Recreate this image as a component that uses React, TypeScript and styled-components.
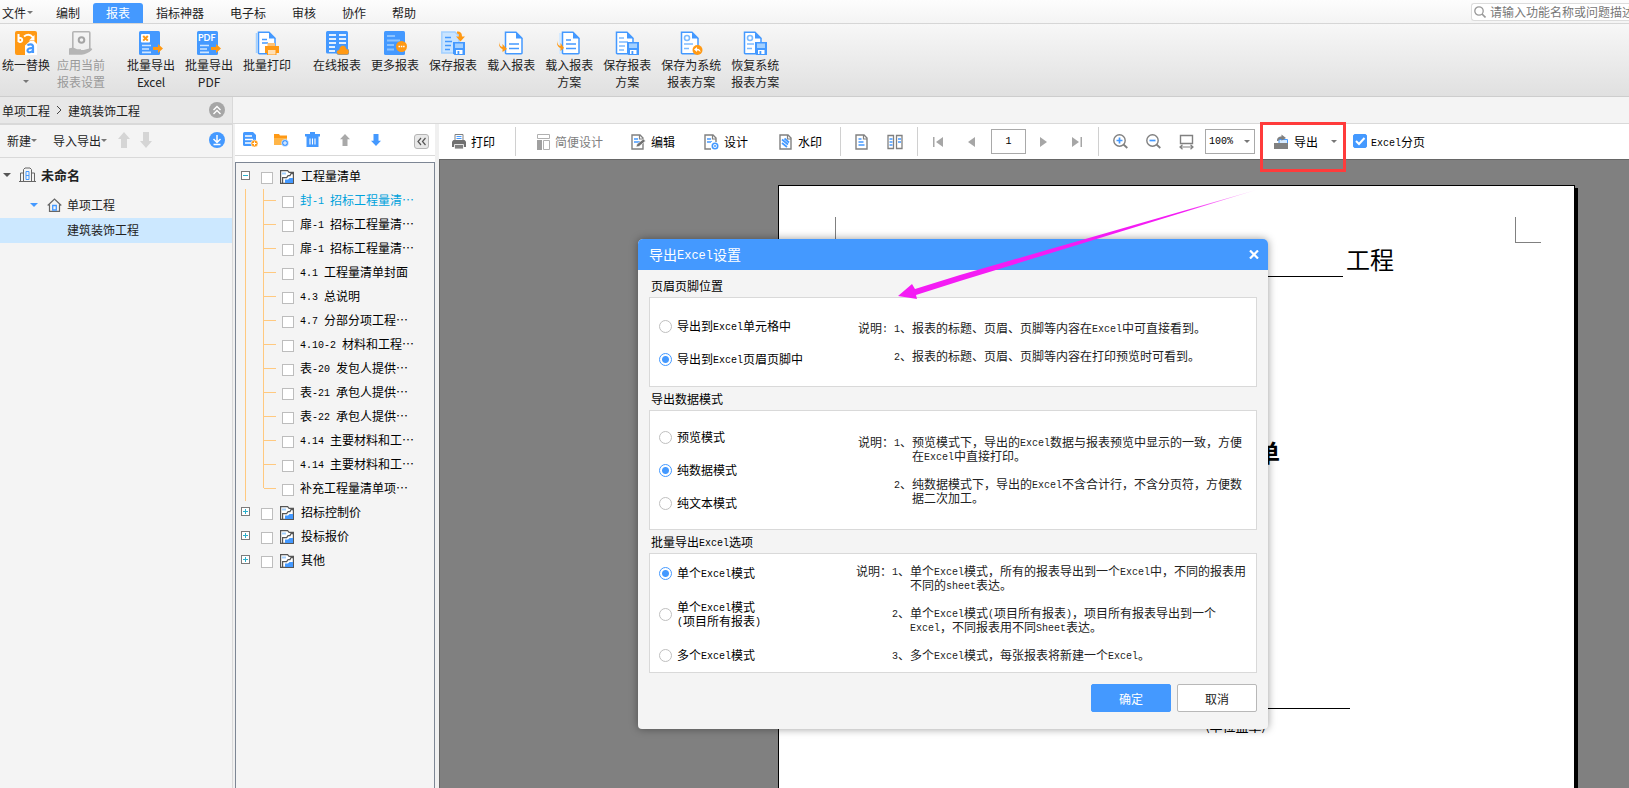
import React, { useState } from 'react';
import styled, { createGlobalStyle, css } from 'styled-components';

const BLUE = '#4499ff';
const ORANGE = '#ff9914';
const PALE = '#a3d0ff';

const GlobalStyle = createGlobalStyle`
  * { box-sizing: border-box; }
  body { margin: 0; overflow: hidden; background: #f4f4f4; }
  body, button, input, select {
    font-family: "Noto Sans CJK SC", "Noto Sans", sans-serif;
    font-size: 12px;
    color: #222;
  }
  button { border: 0; padding: 0; background: none; cursor: pointer; }
  ul, ol { list-style: none; margin: 0; padding: 0; }
  svg { display: block; flex: none; }
  h2, p { margin: 0; }
`;

/* ---------- text with half-width Latin runs ---------- */

const Half = styled.span<{ $large?: boolean }>`
  font-family: "Liberation Mono", monospace;
  font-size: ${(p) => (p.$large ? 12 : 10)}px;
  line-height: 0;
  vertical-align: 1px;
  white-space: pre;
`;

function T({ children, large }: { children: string; large?: boolean }) {
  const parts = children.split(/([\x20-\x7e]+)/).filter(Boolean);
  return (
    <span>
      {parts.map((p, i) =>
        /^[\x20-\x7e]/.test(p) ? <Half key={i} $large={large}>{p}</Half> : p
      )}
    </span>
  );
}

/* ---------- shell ---------- */

const Shell = styled.div`
  display: flex;
  flex-direction: column;
  height: 100vh;
  overflow: hidden;
`;

const MenuBar = styled.nav`
  display: flex;
  align-items: flex-end;
  height: 24px;
  border-bottom: 1px solid #d6d6d6;
  background: linear-gradient(#fdfdfd, #f4f4f4);
`;

const MenuItem = styled.button<{ $active?: boolean; $first?: boolean }>`
  display: flex;
  align-items: center;
  gap: 1px;
  height: 20px;
  padding: 0 ${(p) => (p.$first ? 10 : 13)}px 2px ${(p) => (p.$first ? 2 : 13)}px;
  white-space: nowrap;
  ${(p) => p.$active && css`
    background: ${BLUE};
    color: #fff;
    border-radius: 3px 3px 0 0;
  `}
`;

const Caret = styled.span<{ $size?: number; $color?: string }>`
  flex: none;
  width: 0;
  height: 0;
  border: ${(p) => p.$size ?? 3}px solid transparent;
  border-top-color: ${(p) => p.$color ?? '#777'};
  border-bottom: 0;
`;

const SearchBox = styled.label`
  display: flex;
  align-items: center;
  gap: 4px;
  flex: none;
  width: 158px;
  height: 18px;
  margin: 0 0 2px auto;
  padding-left: 2px;
  border: 1px solid #dcdcdc;
  border-right: 0;
  border-radius: 3px 0 0 3px;
  background: #fff;
  overflow: hidden;
  input {
    flex: none;
    width: 170px;
    height: 16px;
    border: 0;
    padding: 0 0 1px;
    background: none;
    outline: none;
  }
  input::placeholder { color: #777; opacity: 1; }
`;

const Ribbon = styled.div`
  display: flex;
  flex: none;
  gap: 22px;
  height: 73px;
  padding: 7px 2px 0;
  border-bottom: 1px solid #cdcdcd;
  background: linear-gradient(#f7f7f7, #e0e0e0);
`;

const RibbonGroup = styled.div<{ $gap?: number }>`
  display: flex;
  align-items: flex-start;
  gap: ${(p) => p.$gap ?? 10}px;
`;

const RibbonButton = styled.button`
  display: flex;
  flex-direction: column;
  align-items: center;
  line-height: 17px;
  white-space: nowrap;
  svg { margin-bottom: 1px; }
  ${Caret} { margin-top: 7px; }
  &:disabled { color: #9a9a9a; }
`;

const Work = styled.div`
  display: flex;
  flex: 1;
  min-height: 0;
`;

/* ---------- project panel ---------- */

const Side = styled.aside`
  flex: none;
  width: 233px;
  border-right: 1px solid #d9d9d9;
  background: #f4f4f4;
`;

const Crumbs = styled.div`
  display: flex;
  align-items: center;
  gap: 5px;
  height: 28px;
  padding: 0 7px 0 2px;
  background: #e8e8e8;
  border-bottom: 2px solid #d9d9d9;
  svg:last-child { margin-left: auto; }
`;

const SideTools = styled.div`
  display: flex;
  align-items: center;
  height: 33px;
  padding: 0 7px 2px;
  border-bottom: 1px solid #d9d9d9;
`;

const SideTool = styled.button<{ $after: number }>`
  display: flex;
  align-items: center;
  margin-right: ${(p) => p.$after}px;
  &:last-child { margin-left: auto; }
`;

const ProjectRow = styled.li<{ $level: number; $selected?: boolean }>`
  display: flex;
  align-items: center;
  height: ${(p) => (p.$level === 0 ? 35 : 25)}px;
  padding-left: ${(p) => [3, 30, 67][p.$level]}px;
  padding-bottom: 2px;
  font-size: ${(p) => (p.$level === 0 ? 13 : 12)}px;
  font-weight: ${(p) => (p.$level === 0 ? 700 : 400)};
  background: ${(p) => (p.$selected ? '#cce8ff' : 'transparent')};
  ${Caret} { margin-right: ${(p) => (p.$level === 0 ? 8 : 9)}px; }
  svg { margin-right: 5px; }
`;

/* ---------- report column ---------- */

const Right = styled.div`
  display: flex;
  flex-direction: column;
  flex: 1;
  min-width: 0;
`;

const BlankStrip = styled.div`
  flex: none;
  height: 27px;
  border-bottom: 1px solid #d9d9d9;
`;

const Columns = styled.div`
  display: flex;
  flex: 1;
  min-height: 0;
`;

const Reports = styled.section`
  display: flex;
  flex-direction: column;
  flex: none;
  width: 206px;
  padding: 0 4px 0 2px;
  background: linear-gradient(90deg, #f0f0f0 2px, #fff 2px, #fff 202px, #f0f0f0 202px);
`;

const ReportTools = styled.div`
  display: flex;
  align-items: center;
  gap: 16px;
  flex: none;
  height: 32px;
  padding: 0 6px 0 8px;
  border-bottom: 1px solid #d9d9d9;
`;

const FoldButton = styled.button`
  width: 15px;
  height: 15px;
  margin: 4px 0 0 auto;
  border: 1px solid #b5b5b5;
  border-radius: 3px;
  background: #e8e8e8;
`;

const ReportTree = styled.div`
  flex: 1;
  margin-top: 6px;
  padding: 2px 0 0 5px;
  border: 1px solid #7d8694;
  border-bottom: 0;
  background: #f4f4f4;
  color: #000;
  overflow: hidden;
`;

const GroupRow = styled.div`
  display: flex;
  align-items: center;
  height: 24px;
`;

const Expander = styled.button`
  display: flex;
  align-items: center;
  justify-content: center;
  width: 9px;
  height: 9px;
  margin: 0 11px 4px 0;
  border: 1px solid #7b7b7b;
  background: #fff;
`;

const TreeCheck = styled.label<{ $gap: number }>`
  display: flex;
  align-items: center;
  gap: ${(p) => p.$gap}px;
  line-height: 22px;
  white-space: nowrap;
  > span { padding-bottom: 2px; }
  input {
    appearance: none;
    flex: none;
    width: 12px;
    height: 12px;
    margin: 1px 0 0;
    border: 1px solid #bdbdbd;
    background: #fff;
  }
  svg { margin: 0 1px; }
  input:checked { background: ${BLUE}; }
`;

const Leaves = styled.ul`
  margin-left: 4px;
  border-left: 1px solid #ffc980;
`;

const Leaf = styled.li<{ $current?: boolean }>`
  display: flex;
  height: 24px;
  padding-left: 17px;
  color: ${(p) => (p.$current ? '#00a2dc' : '#000')};
`;

const Elbow = styled.span<{ $last: boolean }>`
  width: 19px;
  height: ${(p) => (p.$last ? 11 : 24)}px;
  border-left: 1px solid #ffc980;
  &::after {
    content: "";
    display: block;
    width: 12px;
    height: 11px;
    border-bottom: 1px solid #ffc980;
  }
`;

/* ---------- preview ---------- */

const Preview = styled.main`
  display: flex;
  flex-direction: column;
  flex: 1;
  min-width: 0;
`;

const Toolbar = styled.div`
  display: flex;
  align-items: center;
  flex: none;
  height: 35px;
  padding-left: 13px;
  background: #fff;
  color: #000;
`;

const Tool = styled.button<{ $after: number }>`
  display: flex;
  align-items: center;
  gap: 5px;
  margin-right: ${(p) => p.$after}px;
  color: #000;
  white-space: nowrap;
  &:disabled { color: #808080; }
`;

const Divider = styled.span<{ $after: number }>`
  flex: none;
  width: 1px;
  height: 29px;
  margin-right: ${(p) => p.$after}px;
  background: #d0d0d0;
`;

const PageInput = styled.input`
  width: 35px;
  height: 25px;
  margin-right: 14px;
  padding: 0;
  border: 1px solid #a9a9a9;
  font: 10px "Liberation Mono", monospace;
  text-align: center;
  color: #000;
`;

const ZoomField = styled.div`
  display: grid;
  align-items: center;
  width: 50px;
  margin-right: 5px;
  select, ${Caret} { grid-area: 1 / 1; }
  select {
    appearance: none;
    width: 50px;
    height: 25px;
    padding: 0 0 0 3px;
    border: 1px solid #a9a9a9;
    border-radius: 0;
    background: #fff;
    font: 10px "Liberation Mono", monospace;
    color: #000;
  }
  ${Caret} { justify-self: end; margin-right: 5px; pointer-events: none; }
`;

const ExportWrap = styled.div`
  position: relative;
  display: flex;
  align-items: center;
  gap: 13px;
  height: 35px;
  margin-right: 7px;
  padding: 0 9px 0 14px;
`;

const Callout = styled.span`
  position: absolute;
  z-index: 1;
  inset: -2px 0 -13px 0;
  border: 3px solid #ff3b3b;
  pointer-events: none;
`;

const SplitCheck = styled.label`
  display: flex;
  align-items: center;
  gap: 4px;
  padding-bottom: 1px;
  white-space: nowrap;
`;

const CheckCell = styled.span`
  display: grid;
  input, svg { grid-area: 1 / 1; }
  svg { pointer-events: none; visibility: hidden; }
  input {
    appearance: none;
    width: 14px;
    height: 14px;
    margin: 0;
    border: 1px solid ${BLUE};
    border-radius: 2px;
  }
  input:checked { background: ${BLUE}; }
  input:checked + svg { visibility: visible; }
`;

const Canvas = styled.div`
  display: flex;
  flex: 1;
  min-height: 0;
  border: 1px solid #666;
  border-width: 1px 0 0 1px;
  background: #808080;
  padding: 25px 54px 0 0;
  overflow: hidden;
`;

const Paper = styled.article`
  display: flex;
  flex-direction: column;
  flex: none;
  width: 797px;
  height: 1120px;
  margin-left: auto;
  padding: 31px 33px 0 31px;
  border: 1px solid #000;
  background: #fff;
  box-shadow: 3px 3px 0 #000;
  color: #000;
`;

const CropMarks = styled.div`
  display: flex;
  justify-content: space-between;
  &::before, &::after {
    content: "";
    width: 25px;
    height: 25px;
    border: 0 solid #808080;
    border-bottom-width: 1px;
  }
  &::before { border-right-width: 1px; }
  &::after { border-left-width: 1px; }
`;

const NameLine = styled.div`
  display: flex;
  align-items: flex-end;
  justify-content: flex-end;
  gap: 3px;
  padding-right: 147px;
  font-size: 24px;
  line-height: 32px;
  &::before {
    content: "";
    width: 310px;
    margin-bottom: -2px;
    border-bottom: 1px solid #000;
  }
`;

const PaperTitle = styled.h2`
  margin-top: 161px;
  padding-right: 261px;
  text-align: right;
  font: 700 24px/32px "Noto Sans CJK SC", sans-serif;
`;

const SignLine = styled.div`
  align-self: flex-end;
  width: 330px;
  margin: 240px 191px 0 0;
  padding: 8px 84px 0 0;
  border-top: 1px solid #000;
  text-align: right;
  font-size: 13px;
  line-height: 18px;
`;

/* ---------- dialog ---------- */

const Dialog = styled.form`
  position: absolute;
  z-index: 2;
  top: 239px;
  left: 638px;
  width: 630px;
  border-radius: 5px 5px 4px 4px;
  background: #f4f4f4;
  box-shadow: 0 0 9px rgba(0, 0, 0, 0.4);
  color: #000;
  overflow: hidden;
`;

const DialogHead = styled.header`
  display: flex;
  align-items: center;
  justify-content: space-between;
  height: 31px;
  padding: 0 9px 1px 11px;
  background: ${BLUE};
  color: #fff;
  font-size: 14px;
`;

const DialogBody = styled.div`
  display: flex;
  flex-direction: column;
  padding: 4px 11px 17px;
`;

const Legend = styled.h2`
  padding: 0 2px;
  font-size: 12px;
  font-weight: 400;
  line-height: 23px;
`;

const Panel = styled.div<{ $height: number }>`
  display: flex;
  justify-content: space-between;
  height: ${(p) => p.$height}px;
  border: 1px solid #d9d9d9;
  background: #fff;
`;

const Choices = styled.div<{ $top: number; $gap: number }>`
  display: flex;
  flex-direction: column;
  gap: ${(p) => p.$gap}px;
  padding: ${(p) => p.$top}px 0 0 9px;
`;

const Choice = styled.label`
  display: flex;
  align-items: center;
  gap: 5px;
  line-height: 14px;
  input {
    appearance: none;
    flex: none;
    width: 13px;
    height: 13px;
    margin: 0;
    border: 1px solid #bfbfbf;
    border-radius: 50%;
    background: #fff;
  }
  input:checked {
    border-color: ${BLUE};
    background: radial-gradient(circle, ${BLUE} 3px, #fff 4px);
  }
`;

const Notes = styled.div<{ $top: number; $width: number }>`
  display: flex;
  width: ${(p) => p.$width}px;
  padding-top: ${(p) => p.$top}px;
  color: #222;
  line-height: 14px;
  white-space: nowrap;
  > span { width: 36px; flex: none; }
  ol { display: flex; flex-direction: column; gap: 14px; }
  li { display: flex; }
  li > span { width: 18px; flex: none; }
`;

const Actions = styled.footer`
  display: flex;
  justify-content: flex-end;
  gap: 6px;
  margin-top: 11px;
`;

const Action = styled.button<{ $primary?: boolean }>`
  width: 80px;
  height: 28px;
  border: 1px solid ${(p) => (p.$primary ? BLUE : '#b8b8b8')};
  border-radius: 2px;
  background: ${(p) => (p.$primary ? BLUE : '#fff')};
  color: ${(p) => (p.$primary ? '#fff' : '#222')};
`;

const Pointer = styled.svg`
  position: absolute;
  z-index: 3;
  top: 188px;
  left: 896px;
  pointer-events: none;
`;

/* ---------- icons ---------- */

const Svg = ({ w = 24, h = 24, children }: { w?: number; h?: number; children: React.ReactNode }) => (
  <svg width={w} height={h} viewBox={`0 0 ${w} ${h}`} fill="none" aria-hidden="true">{children}</svg>
);

const SheetOutline = ({ x = 0 }: { x?: number }) => (
  <g transform={`translate(${x} 0)`}>
    <path d="M1.500 1.200H12l6 6V22a.8.8 0 0 1-.8.8H2.300a.8.8 0 0 1-.8-.8z" fill="#fff" stroke={BLUE} strokeWidth="1.500" />
    <path d="M12 1v6.500h6.500z" fill={BLUE} />
  </g>
);

const Disk = () => (
  <g>
    <path d="M12 11h12v13H13.500l-1.500-1.500z" fill={BLUE} />
    <rect x="14" y="12.500" width="8" height="4.500" fill={PALE} />
    <rect x="15" y="19" width="6.500" height="4" fill="#fff" />
    <rect x="16.500" y="20" width="1.800" height="3" fill={BLUE} />
  </g>
);

const RightArrow = () => <path d="M14 16h5v-3l5 4.500-5 4.500v-3h-5z" fill={ORANGE} />;

const icons = {
  replace: (
    <Svg>
      <rect x="1" width="22" height="24" rx="2" fill={ORANGE} />
      <path d="M4.500 3v8M4.500 8a2 2 0 1 1 0 2" stroke="#fff" strokeWidth="2" />
      <path d="M10 5.500c4-3 7-1.500 9 1" stroke="#fff" strokeWidth="2" />
      <path d="M20.500 4v5.500H15z" fill="#fff" />
      <path d="M11 14.500 16 10h4l3 3v11H11z" fill="#fff" />
      <path d="M13.500 14.500c1-1.500 5.500-1.800 5.500 1V22M19 17.200c-4-.4-5.500.8-5.500 2.300 0 2.500 4.500 2.300 5.500-.3" stroke={BLUE} strokeWidth="2.200" />
    </Svg>
  ),
  apply: (
    <Svg>
      <rect x="3.800" y=".8" width="17" height="19" rx="1" stroke="#b5b5b5" strokeWidth="1.600" />
      <circle cx="12.500" cy="9" r="2.800" stroke="#a5a5a5" strokeWidth="2" />
      <path d="M0 17.500c3-1.500 6-.8 8 .8h4v1.500l9-2.500c2-.5 3 .8 1.500 2-3 2.500-6 4.200-10 4.400H0z" fill="#b5b5b5" />
    </Svg>
  ),
  excel: (
    <Svg>
      <rect width="21" height="24" rx="1.500" fill={BLUE} />
      <rect x="2" y="3" width="9" height="8.500" rx="1" fill="#fff" />
      <path d="m4.200 5 4.600 4.600M8.800 5 4.200 9.600" stroke={ORANGE} strokeWidth="2" />
      <path d="M3 14.500h9M3 18h7M3 21.300h9" stroke="#cfe6ff" strokeWidth="1.700" />
      <RightArrow />
    </Svg>
  ),
  pdf: (
    <Svg>
      <rect width="21" height="24" rx="1.500" fill={BLUE} />
      <text x="1" y="10" fill="#fff" fontFamily="Lato, sans-serif" fontSize="9" fontWeight="700">PDF</text>
      <path d="M3 14.500h9M3 18h7M3 21.300h9" stroke="#cfe6ff" strokeWidth="1.700" />
      <RightArrow />
    </Svg>
  ),
  batchPrint: (
    <Svg>
      <path d="M1.500 2v20" stroke={PALE} strokeWidth="1.500" />
      <SheetOutline x={2} />
      <path d="M7 8.500h5M7 12h6" stroke={BLUE} strokeWidth="1.500" />
      <path d="M12.500 12H20v4h-7.500z" fill="#ffc274" />
      <path d="M10 15h14v7H10z" fill={ORANGE} />
      <path d="M12.500 18.500h8.500V24h-8.500z" fill="#ffe0b5" stroke={ORANGE} />
    </Svg>
  ),
  online: (
    <Svg>
      <rect x="1" width="22" height="22.500" rx="1.500" fill={BLUE} />
      <path d="M4 4h7M14 4h7M4 8h7M14 8h7M4 12h7M14 12h7M4 16h6M4 20h6" stroke="#e4f1ff" strokeWidth="1.800" />
      <path d="M15 24c-4.500 0-4.500-5-1-5.300.5-5.700 7-5.700 7.500-.9 4 .2 3.500 6.200 0 6.200z" fill={ORANGE} stroke={BLUE} strokeWidth=".8" />
    </Svg>
  ),
  more: (
    <Svg>
      <rect x="1" width="21" height="24" rx="1.500" fill={BLUE} />
      <path d="M4 5h8M4 9.500h13M4 14h7M4 18.500h7" stroke="#8cc3ff" strokeWidth="1.800" />
      <circle cx="18.500" cy="15.500" r="5.500" fill={ORANGE} />
      <path d="M15.500 15.500h1.500m.8 0h1.500m.8 0h1.500" stroke="#fff" strokeWidth="1.600" />
    </Svg>
  ),
  save: (
    <Svg>
      <path d="M.8 1H14l4 4v17H.8z" fill="#c9e4ff" stroke={PALE} strokeWidth="1.500" />
      <path d="M4 6.500h6M4 10.500h7M4 14.500h6M4 18.500h5" stroke={BLUE} strokeWidth="1.300" />
      <path d="M16 .5c4 0 5 2 5 5h3l-4.500 5-4.500-5h3c0-2-.5-3-2-3z" fill={ORANGE} />
      <Disk />
    </Svg>
  ),
  load: (
    <Svg>
      <SheetOutline x={5} />
      <path d="M10 13h10M10 17.500h10" stroke={BLUE} strokeWidth="1.700" />
      <path d="M0 10.500c.3 4 1.500 5 3.500 5.500v-3L8 18l-4.500 3v-3C1 17.500-.7 14 0 10.500z" fill={ORANGE} />
    </Svg>
  ),
  loadPlan: (
    <Svg>
      <path d="M2 2h5v21H2z" fill="#d5eaff" />
      <SheetOutline x={4} />
      <path d="M9 9h5M9 13h10M9 17.500h10" stroke={BLUE} strokeWidth="1.500" />
      <path d="M0 9.500c.3 4 1.500 5 3.500 5.500v-3L7 17l-3.500 3v-3C1 16.500-.7 13 0 9.500z" fill={ORANGE} />
    </Svg>
  ),
  savePlan: (
    <Svg>
      <SheetOutline />
      <path d="M4 7h5M4 11h9M4 15h6M4 19h5" stroke="#7dbbff" strokeWidth="1.500" />
      <Disk />
    </Svg>
  ),
  saveSystem: (
    <Svg>
      <SheetOutline x={1} />
      <circle cx="8" cy="7" r="2.500" stroke="#7dbbff" strokeWidth="1.600" />
      <path d="M5 13h9M5 17.500h5" stroke="#7dbbff" strokeWidth="1.500" />
      <circle cx="18.500" cy="19" r="5" fill={ORANGE} />
      <path d="m15 18.500 3-2.500v1.700c2.500 0 3.500 1.300 3.500 3.500-1-1.300-1.800-1.700-3.500-1.700V21z" fill="#fff" />
    </Svg>
  ),
  restore: (
    <Svg>
      <SheetOutline />
      <circle cx="7" cy="7" r="2.500" stroke="#7dbbff" strokeWidth="1.600" />
      <path d="M4 13h7M4 17.500h5" stroke="#7dbbff" strokeWidth="1.500" />
      <Disk />
    </Svg>
  ),
};

const FolderIcon = () => (
  <Svg w={14} h={14}>
    <path d="M.6.600h7l1.500 1.700h4.300V13.400H.600z" fill="#fff" stroke="#555" strokeWidth="1.200" />
    <path d="M2 3.500h4" stroke={PALE} strokeWidth="2" />
    <path d="M2.600 13V7.600h4l1.500-2H10l1-2h2.500" stroke="#555" strokeWidth="1.200" />
    <path d="M5 13v-3.500h3L9.500 8H13v5z" fill={BLUE} />
  </Svg>
);

const DocIcon = ({ children, w = 15 }: { children: React.ReactNode; w?: number }) => (
  <Svg w={w} h={16}>
    <path d="M1 1h8l3 3v11H1z" fill="#fff" stroke="#808080" strokeWidth="1.400" />
    <path d="M8.500 1v4H12" stroke="#808080" strokeWidth="1.200" />
    {children}
  </Svg>
);

const ThinArrow = ({ flip, color, big }: { flip?: boolean; color: string; big?: boolean }) => (
  <svg width={big ? 12 : 10} height={big ? 16 : 12} viewBox="0 0 12 16" preserveAspectRatio="none" aria-hidden="true">
    <path d="M6 0l6 7H9v9H3V7H0z" fill={color} transform={flip ? 'rotate(180 6 8)' : undefined} />
  </svg>
);

const Magnifier = ({ plus }: { plus?: boolean }) => (
  <Svg w={15} h={15}>
    <circle cx="6.500" cy="6.500" r="5.700" stroke="#808080" strokeWidth="1.400" />
    <path d="m10.500 10.500 3.800 3.500" stroke="#808080" strokeWidth="1.800" />
    <path d={plus ? 'M3.500 6.500h6M6.500 3.500v6' : 'M3.500 6.500h6'} stroke={BLUE} strokeWidth="1.700" />
  </Svg>
);

const Step = ({ end, back }: { end?: boolean; back?: boolean }) => (
  <svg width={end ? 10 : 7} height="10" viewBox={end ? '0 0 10 10' : '0 0 7 10'} aria-hidden="true">
    <g fill="#a6a6a6" transform={back ? `translate(${end ? 10 : 7} 0) scale(-1 1)` : undefined}>
      <path d="M0 0l7 5-7 5z" />
      {end && <path d="M8.500 0H10v10H8.500z" />}
    </g>
  </svg>
);

/* ---------- data ---------- */

const menus = ['编制', '报表', '指标神器', '电子标', '审核', '协作', '帮助'];

const leaves = [
  '封-1 招标工程量清…', '扉-1 招标工程量清…', '扉-1 招标工程量清…', '4.1 工程量清单封面', '4.3 总说明',
  '4.7 分部分项工程…', '4.10-2 材料和工程…', '表-20 发包人提供…', '表-21 承包人提供…', '表-22 承包人提供…',
  '4.14 主要材料和工…', '4.14 主要材料和工…', '补充工程量清单项…',
];

interface Cmd { icon: keyof typeof icons; lines: string[]; caret?: boolean; disabled?: boolean }

const ribbon: { gap?: number; items: Cmd[] }[] = [
  { gap: 7, items: [
    { icon: 'replace', lines: ['统一替换'], caret: true },
    { icon: 'apply', lines: ['应用当前', '报表设置'], disabled: true },
  ] },
  { items: [
    { icon: 'excel', lines: ['批量导出', 'Excel'] },
    { icon: 'pdf', lines: ['批量导出', 'PDF'] },
    { icon: 'batchPrint', lines: ['批量打印'] },
  ] },
  { items: [
    { icon: 'online', lines: ['在线报表'] },
    { icon: 'more', lines: ['更多报表'] },
    { icon: 'save', lines: ['保存报表'] },
    { icon: 'load', lines: ['载入报表'] },
    { icon: 'loadPlan', lines: ['载入报表', '方案'] },
    { icon: 'savePlan', lines: ['保存报表', '方案'] },
    { icon: 'saveSystem', lines: ['保存为系统', '报表方案'] },
    { icon: 'restore', lines: ['恢复系统', '报表方案'] },
  ] },
];

interface Section {
  name: string; title: string; height: number; top: number; gap: number; checked: number;
  options: string[][]; label: string; notesTop: number; notesWidth: number; notes: string[][];
}

const sections: Section[] = [
  {
    name: 'place', title: '页眉页脚位置', height: 90, top: 21, gap: 19, checked: 1,
    options: [['导出到Excel单元格中'], ['导出到Excel页眉页脚中']],
    label: '说明: ', notesTop: 23, notesWidth: 398,
    notes: [['报表的标题、页眉、页脚等内容在Excel中可直接看到。'], ['报表的标题、页眉、页脚等内容在打印预览时可看到。']],
  },
  {
    name: 'mode', title: '导出数据模式', height: 120, top: 19, gap: 19, checked: 1,
    options: [['预览模式'], ['纯数据模式'], ['纯文本模式']],
    label: '说明：', notesTop: 24, notesWidth: 398,
    notes: [
      ['预览模式下，导出的Excel数据与报表预览中显示的一致，方便', '在Excel中直接打印。'],
      ['纯数据模式下，导出的Excel不含合计行，不含分页符，方便数', '据二次加工。'],
    ],
  },
  {
    name: 'batch', title: '批量导出Excel选项', height: 120, top: 12, gap: 20, checked: 0,
    options: [['单个Excel模式'], ['单个Excel模式', '(项目所有报表)'], ['多个Excel模式']],
    label: '说明：', notesTop: 10, notesWidth: 400,
    notes: [
      ['单个Excel模式，所有的报表导出到一个Excel中，不同的报表用', '不同的sheet表达。'],
      ['单个Excel模式(项目所有报表)，项目所有报表导出到一个', 'Excel，不同报表用不同Sheet表达。'],
      ['多个Excel模式，每张报表将新建一个Excel。'],
    ],
  },
];

const Lines = ({ lines }: { lines: string[] }) => (
  <div>
    {lines.map((l, i) => (
      <React.Fragment key={i}>{i > 0 && <br />}<T>{l}</T></React.Fragment>
    ))}
  </div>
);

/* ---------- parts ---------- */

function ProjectPanel() {
  return (
    <Side>
      <Crumbs>
        <span>单项工程</span>
        <Svg w={8} h={10}><path d="m2 1 4 4-4 4" stroke="#444" /></Svg>
        <span>建筑装饰工程</span>
        <Svg w={16} h={16}>
          <circle cx="8" cy="8" r="8" fill="#a6a6a6" />
          <path d="m4.500 8 3.500-3.500L11.500 8M4.500 12 8 8.500l3.500 3.500" stroke="#fff" strokeWidth="1.400" />
        </Svg>
      </Crumbs>
      <SideTools>
        <SideTool $after={16}>新建<Caret /></SideTool>
        <SideTool $after={11}>导入导出<Caret /></SideTool>
        <SideTool $after={10} aria-label="上移"><ThinArrow color="#d5d5d5" big /></SideTool>
        <SideTool $after={0} aria-label="下移"><ThinArrow color="#d5d5d5" big flip /></SideTool>
        <SideTool $after={0} aria-label="下载">
          <Svg w={16} h={16}>
            <circle cx="8" cy="8" r="8" fill={BLUE} />
            <path d="M8 3v7M4.500 7 8 10.500 11.500 7M4.500 12.500h7" stroke="#fff" strokeWidth="1.500" />
          </Svg>
        </SideTool>
      </SideTools>
      <ul>
        <ProjectRow $level={0}>
          <Caret $size={4} $color="#555" />
          <Svg w={17} h={16}>
            <path d="M4.500 15V2.500L6 1h5l1.500 1.500V15M4.500 6H1.500v9M12.500 6h3v9M0 14.500h17" stroke="#666" />
            <path d="M7 4.500h3v8H7zM7 8.500h3" stroke={BLUE} />
          </Svg>
          未命名
        </ProjectRow>
        <ProjectRow $level={1}>
          <Caret $size={4} $color={BLUE} />
          <Svg w={15} h={14}>
            <path d="M.7 7.500 7.500 1l6.800 6.500M2.500 6.500v6.800h10V6.500" stroke="#666" strokeWidth="1.200" />
            <path d="M5.700 7.500h3.600V12H5.700z" stroke={BLUE} strokeWidth="1.300" />
          </Svg>
          单项工程
        </ProjectRow>
        <ProjectRow $level={2} $selected>建筑装饰工程</ProjectRow>
      </ul>
    </Side>
  );
}

function ReportColumn() {
  const group = (name: string, open?: boolean) => (
    <GroupRow>
      <Expander aria-label={open ? '折叠' : '展开'}>
        <Svg w={5} h={5}><path d={open ? 'M0 2.500h5' : 'M0 2.500h5M2.500 0v5'} stroke="#2ab0cc" /></Svg>
      </Expander>
      <TreeCheck $gap={6}>
        <input type="checkbox" />
        <FolderIcon />
        <T>{name}</T>
      </TreeCheck>
    </GroupRow>
  );
  return (
    <Reports>
      <ReportTools>
        <button aria-label="新建报表">
          <Svg w={15} h={15}>
            <path d="M0 1.500Q0 0 1.500 0H10l3 3v11H1.500Q0 14 0 12.500z" fill={BLUE} />
            <path d="M2 4h7M2 7.500h8M2 11h6" stroke="#fff" strokeWidth="1.300" />
            <circle cx="11.500" cy="11.500" r="3.500" fill={ORANGE} stroke="#fff" strokeWidth=".6" />
            <path d="M9.500 11.500h4m-2-2v4" stroke="#fff" />
          </Svg>
        </button>
        <button aria-label="新建文件夹">
          <Svg w={15} h={15}>
            <path d="M0 2h5l1 1.500h7V6H0z" fill={ORANGE} />
            <path d="M0 6h13v7H0z" fill="#ffb547" />
            <circle cx="11" cy="11" r="3.500" fill={BLUE} stroke="#fff" strokeWidth=".6" />
            <path d="M9 11h4m-2-2v4" stroke="#fff" />
          </Svg>
        </button>
        <SideTool $after={4} aria-label="删除">
          <Svg w={15} h={15}>
            <path d="M5 0h5v2h5v2.500h-1.500V15h-12V4.500H0V2h5z" fill={BLUE} />
            <path d="M5 6.500v6M7.500 6.500v6M10 6.500v6" stroke="#fff" strokeWidth="1.100" />
          </Svg>
        </SideTool>
        <SideTool $after={5} aria-label="上移"><ThinArrow color="#a9a9a9" /></SideTool>
        <button aria-label="下移"><ThinArrow color={BLUE} flip /></button>
        <FoldButton aria-label="收起">
          <Svg w={13} h={13}><path d="M6 3 3 6.500 6 10M10.500 3l-3 3.500 3 3.500" stroke="#555" strokeWidth="1.200" /></Svg>
        </FoldButton>
      </ReportTools>
      <ReportTree>
        {group('工程量清单', true)}
        <Leaves>
          {leaves.map((name, i) => (
            <Leaf key={i} $current={i === 0}>
              <Elbow $last={i === leaves.length - 1} />
              <TreeCheck $gap={6}><input type="checkbox" /><T>{name}</T></TreeCheck>
            </Leaf>
          ))}
        </Leaves>
        {group('招标控制价')}
        {group('投标报价')}
        {group('其他')}
      </ReportTree>
    </Reports>
  );
}

function PreviewToolbar() {
  return (
    <Toolbar>
      <Tool $after={20}>
        <Svg w={14} h={16}>
          <path d="M3 .5h8v6H3z" fill="#fff" stroke="#808080" />
          <path d="M4.500 2.500h5M4.500 4.500h5" stroke={BLUE} />
          <path d="M1.500 6h11l1.500 1.500V13H0V7.500z" fill="#707070" />
          <path d="M2.500 10.500h9v4.500h-9z" fill="#808080" stroke="#fff" strokeWidth=".8" />
        </Svg>
        打印
      </Tool>
      <Divider $after={21} />
      <Tool $after={28} disabled>
        <Svg w={13} h={16}>
          <path d="M.5.500h12v4H.500z" stroke="#b0b0b0" />
          <path d="M0 6h5v10H0z" fill="#a0a0a0" />
          <path d="M6.500 6.500h6v9h-6z" stroke="#b0b0b0" />
        </Svg>
        简便设计
      </Tool>
      <Tool $after={29}>
        <DocIcon>
          <path d="M3 5h4M3 8h6" stroke={BLUE} strokeWidth="1.300" />
          <path d="m5 13 1-3 6.500-5 2 2L8 12.500z" fill="#707070" stroke="#fff" strokeWidth=".6" />
        </DocIcon>
        编辑
      </Tool>
      <Tool $after={31}>
        <DocIcon>
          <path d="M3 5h4M3 8h5" stroke={BLUE} strokeWidth="1.300" />
          <path d="M7 8h8v8H7z" fill="#fff" />
          <circle cx="11" cy="12" r="2.700" stroke={BLUE} strokeWidth="1.600" />
          <circle cx="11" cy="12" r="1" fill={BLUE} />
        </DocIcon>
        设计
      </Tool>
      <Tool $after={18}>
        <DocIcon w={14}><path d="m3 5.500 6 5M3 9l5 4M5.500 4.500l4.500 4" stroke={BLUE} strokeWidth="1.700" /></DocIcon>
        水印
      </Tool>
      <Divider $after={14} />
      <Tool $after={18} aria-label="单页"><DocIcon w={14}><path d="M3.500 5h3M3.500 8h5M3.500 11h6" stroke={BLUE} strokeWidth="1.500" /></DocIcon></Tool>
      <Tool $after={14} aria-label="双页">
        <Svg w={16} h={16}>
          <path d="M1 1.500h5.500v13H1zM9.500 1.500H15v13H9.500z" stroke="#808080" strokeWidth="1.300" />
          <path d="M2.500 5h3M2.500 8h3M2.500 11h3M11 5h3M11 8h3" stroke={BLUE} strokeWidth="1.300" />
        </Svg>
      </Tool>
      <Divider $after={15} />
      <Tool $after={25} aria-label="首页"><Step end back /></Tool>
      <Tool $after={16} aria-label="上一页"><Step back /></Tool>
      <PageInput aria-label="页码" defaultValue="1" />
      <Tool $after={25} aria-label="下一页"><Step /></Tool>
      <Tool $after={16} aria-label="末页"><Step end /></Tool>
      <Divider $after={14} />
      <Tool $after={18} aria-label="放大"><Magnifier plus /></Tool>
      <Tool $after={18} aria-label="缩小"><Magnifier /></Tool>
      <Tool $after={11} aria-label="适合宽度">
        <Svg w={15} h={16}>
          <path d="M1.500 1.500h12v8h-12z" stroke="#808080" strokeWidth="1.400" />
          <path d="M1 13h13M3.500 10.800 1 13l2.500 2.200M11.500 10.800 14 13l-2.500 2.200" stroke="#808080" strokeWidth="1.200" />
        </Svg>
      </Tool>
      <ZoomField>
        <select aria-label="缩放比例"><option>100%</option></select>
        <Caret />
      </ZoomField>
      <ExportWrap>
        <Tool $after={0}>
          <Svg w={15} h={16}>
            <path d="M5 9V5.500h8.500V9" fill="#d5eaff" stroke={BLUE} />
            <path d="M3 7C3 3.500 5 2.500 7.500 2.500V.500L12 4 7.500 6.800V5C5.500 5 4.500 5.500 4.500 7z" fill="#808080" />
            <path d="M0 9h14v6H0z" fill="#808080" />
          </Svg>
          导出
        </Tool>
        <Caret />
        <Callout />
      </ExportWrap>
      <SplitCheck>
        <CheckCell>
          <input type="checkbox" defaultChecked />
          <Svg w={14} h={14}><path d="m3 7 3 3 5.500-6" stroke="#fff" strokeWidth="2" /></Svg>
        </CheckCell>
        <T>Excel分页</T>
      </SplitCheck>
    </Toolbar>
  );
}

function ExportDialog() {
  const [picked, setPicked] = useState(sections.map((s) => s.checked));
  return (
    <Dialog onSubmit={(e) => e.preventDefault()}>
      <DialogHead>
        <T large>导出Excel设置</T>
        <button type="button" aria-label="关闭">
          <Svg w={10} h={9}><path d="m1 .5 8 8M9 .5l-8 8" stroke="#fff" strokeWidth="2.200" /></Svg>
        </button>
      </DialogHead>
      <DialogBody>
        {sections.map((s, si) => (
          <React.Fragment key={s.name}>
            <Legend><T>{s.title}</T></Legend>
            <Panel $height={s.height}>
              <Choices $top={s.top} $gap={s.gap}>
                {s.options.map((lines, i) => (
                  <Choice key={i}>
                    <input
                      type="radio"
                      name={s.name}
                      checked={picked[si] === i}
                      onChange={() => setPicked(picked.map((v, k) => (k === si ? i : v)))}
                    />
                    <Lines lines={lines} />
                  </Choice>
                ))}
              </Choices>
              <Notes $top={s.notesTop} $width={s.notesWidth}>
                <T>{s.label}</T>
                <ol>
                  {s.notes.map((lines, i) => (
                    <li key={i}><T>{`${i + 1}、`}</T><Lines lines={lines} /></li>
                  ))}
                </ol>
              </Notes>
            </Panel>
          </React.Fragment>
        ))}
        <Actions>
          <Action $primary>确定</Action>
          <Action type="button">取消</Action>
        </Actions>
      </DialogBody>
    </Dialog>
  );
}

export default function App() {
  return (
    <Shell>
      <GlobalStyle />
      <MenuBar>
        <MenuItem $first>文件<Caret /></MenuItem>
        {menus.map((m) => <MenuItem key={m} $active={m === '报表'}>{m}</MenuItem>)}
        <SearchBox>
          <Svg w={12} h={12}>
            <circle cx="5" cy="5" r="4.200" stroke="#999" strokeWidth="1.300" />
            <path d="m8 8 3.500 3.500" stroke="#999" strokeWidth="1.600" />
          </Svg>
          <input aria-label="搜索" placeholder="请输入功能名称或问题描述" />
        </SearchBox>
      </MenuBar>
      <Ribbon>
        {ribbon.map((g, i) => (
          <RibbonGroup key={i} $gap={g.gap}>
            {g.items.map((c) => (
              <RibbonButton key={c.icon} disabled={c.disabled}>
                {icons[c.icon]}
                {c.lines.map((l) => <span key={l}>{l}</span>)}
                {c.caret && <Caret />}
              </RibbonButton>
            ))}
          </RibbonGroup>
        ))}
      </Ribbon>
      <Work>
        <ProjectPanel />
        <Right>
          <BlankStrip />
          <Columns>
            <ReportColumn />
            <Preview>
              <PreviewToolbar />
              <Canvas>
                <Paper>
                  <CropMarks />
                  <NameLine>工程</NameLine>
                  <PaperTitle>单</PaperTitle>
                  <SignLine>(单位盖章)</SignLine>
                </Paper>
              </Canvas>
            </Preview>
          </Columns>
        </Right>
      </Work>
      <ExportDialog />
      <Pointer width="362" height="114" viewBox="0 0 362 114" aria-hidden="true">
        <defs>
          <linearGradient id="tail" x1="0" x2="1" y1="0" y2="0">
            <stop offset="0.8" stopColor="#f41cf4" />
            <stop offset="1" stopColor="#f41cf4" stopOpacity="0.2" />
          </linearGradient>
        </defs>
        <path d="M2 108 16 96l3 5L64 87 360 2 64 93 20 107l1 4z" fill="url(#tail)" />
      </Pointer>
    </Shell>
  );
}
